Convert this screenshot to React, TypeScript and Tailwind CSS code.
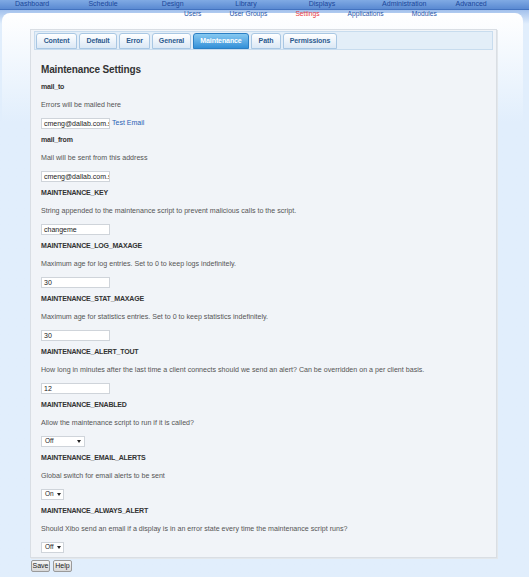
import React from 'react';

type Field = {
  key: string;
  help: string;
  kind: 'text' | 'select';
  value: string;
  width?: number;
  test?: boolean;
};

const fields: Field[] = [
  { key: 'mail_to', help: 'Errors will be mailed here', kind: 'text', value: 'cmeng@dallab.com.sg', test: true },
  { key: 'mail_from', help: 'Mail will be sent from this address', kind: 'text', value: 'cmeng@dallab.com.sg' },
  { key: 'MAINTENANCE_KEY', help: 'String appended to the maintenance script to prevent malicious calls to the script.', kind: 'text', value: 'changeme' },
  { key: 'MAINTENANCE_LOG_MAXAGE', help: 'Maximum age for log entries. Set to 0 to keep logs indefinitely.', kind: 'text', value: '30' },
  { key: 'MAINTENANCE_STAT_MAXAGE', help: 'Maximum age for statistics entries. Set to 0 to keep statistics indefinitely.', kind: 'text', value: '30' },
  { key: 'MAINTENANCE_ALERT_TOUT', help: 'How long in minutes after the last time a client connects should we send an alert? Can be overridden on a per client basis.', kind: 'text', value: '12' },
  { key: 'MAINTENANCE_ENABLED', help: 'Allow the maintenance script to run if it is called?', kind: 'select', value: 'Off', width: 44 },
  { key: 'MAINTENANCE_EMAIL_ALERTS', help: 'Global switch for email alerts to be sent', kind: 'select', value: 'On', width: 23 },
  { key: 'MAINTENANCE_ALWAYS_ALERT', help: 'Should Xibo send an email if a display is in an error state every time the maintenance script runs?', kind: 'select', value: 'Off', width: 23 },
];

const mainNav = ['Dashboard', 'Schedule', 'Design', 'Library', 'Displays', 'Administration', 'Advanced'];
const subNav = ['Users', 'User Groups', 'Settings', 'Applications', 'Modules'];

const tabs = [
  { label: 'Content', w: 'w-[41px]' },
  { label: 'Default', w: 'w-[38px]' },
  { label: 'Error', w: 'w-[31px]' },
  { label: 'General', w: 'w-[39px]' },
  { label: 'Maintenance', w: 'w-[56px]', active: true },
  { label: 'Path', w: 'w-[30px]' },
  { label: 'Permissions', w: 'w-[54px]' },
];

function SettingRow({ field }: { field: Field }) {
  return (
    <div className="h-[53px]">
      <div className="h-[17px] flex items-center text-[7px] font-bold tracking-[-0.2px] text-[#333]">{field.key}</div>
      <div className="h-[18px] flex items-center text-[7.1px] text-[#555] whitespace-nowrap">{field.help}</div>
      <div className="h-[18px] flex items-center">
        {field.kind === 'text' ? (
          <>
            <div className="w-[69px] h-[11px] bg-white border border-[#cfd4da] pl-[2px] text-[7px] leading-[9px] text-[#222] overflow-hidden whitespace-nowrap">
              {field.value}
            </div>
            {field.test && <span className="ml-[2px] text-[7px] text-[#2a62b4]">Test Email</span>}
          </>
        ) : (
          <div
            className="h-[11px] bg-white border border-[#cfd4da] pl-[3px] pr-[3px] flex items-center justify-between gap-[3px] text-[6.5px] text-[#222]"
            style={{ width: field.width }}
          >
            <span>{field.value}</span>
            <span className="w-0 h-0 border-l-[2px] border-r-[2px] border-t-[3px] border-l-transparent border-r-transparent border-t-[#222]" />
          </div>
        )}
      </div>
    </div>
  );
}

export default function App() {
  return (
    <div className="min-h-[577px] w-[529px] bg-[#e1eefc] font-['Liberation_Sans',Arial,sans-serif] overflow-hidden">
      {/* top nav */}
      <div className="h-[10px] bg-gradient-to-b from-[#80aae4] to-[#5a8ad2] border-b border-[#4373c0] flex pl-[15px]">
        {mainNav.map((n) => (
          <div key={n} className="w-[74px] text-[7px] leading-[8px] text-[#1b479a] whitespace-nowrap">{n}</div>
        ))}
      </div>
      <div className="bg-gradient-to-b from-[#a3c1ec] to-[#e1eefc] to-[14px]">
        {/* sub nav */}
        <div className="h-[8px] flex items-center gap-[28px] pl-[184px] pt-[1px] text-[6.7px] text-[#2a57a8]">
          {subNav.map((n) => (
            <span key={n} className={n === 'Settings' ? 'text-[#e8383c]' : ''}>{n}</span>
          ))}
        </div>
        {/* panel */}
        <div className="-mt-[5px] ml-[2px] mr-[6px] rounded-t-[8px] bg-gradient-to-b from-white to-[#e1eefc] to-[110px] pt-[16px] pb-[6px]">
          <div className="ml-[28px] w-[467px] bg-[#f1f4f8] border border-[#d9dee4] shadow-[1px_1px_0_#e3e7eb]">
            {/* tabs */}
            <div className="mt-[1px] ml-[3px] w-[459px] h-[19px] bg-[#e3eef8] border border-[#c8dcee] pt-[1px] pl-[1px] flex gap-[2px]">
              {tabs.map((t) => (
                <div
                  key={t.label}
                  className={
                    t.w +
                    ' h-[16px] rounded-t-[3px] border flex items-center justify-center text-[7px] font-bold tracking-[-0.1px] ' +
                    (t.active
                      ? 'bg-gradient-to-b from-[#86c9f1] to-[#3190d8] border-[#2b7fc4] text-white'
                      : 'bg-gradient-to-b from-white to-[#dbe8f5] border-[#a9c7e3] text-[#2c5a8e]')
                  }
                >
                  {t.label}
                </div>
              ))}
            </div>
            <div className="px-[10px] pb-[1px]">
              <div className="mt-[14px] h-[12px] leading-[12px] text-[10px] font-bold tracking-[-0.15px] text-[#333]">
                Maintenance Settings
              </div>
              <div className="mt-[3px]">
                {fields.map((f) => (
                  <SettingRow key={f.key} field={f} />
                ))}
              </div>
            </div>
          </div>
          <div className="mt-[2px] ml-[29px] flex gap-[3px]">
            {['Save', 'Help'].map((b) => (
              <button
                key={b}
                className="w-[19px] h-[12px] rounded-[2px] border border-[#9a9a9a] bg-gradient-to-b from-[#f6f6f6] to-[#d8d8d8] text-[7px] leading-[10px] text-[#222]"
              >
                {b}
              </button>
            ))}
          </div>
        </div>
      </div>
    </div>
  );
}
